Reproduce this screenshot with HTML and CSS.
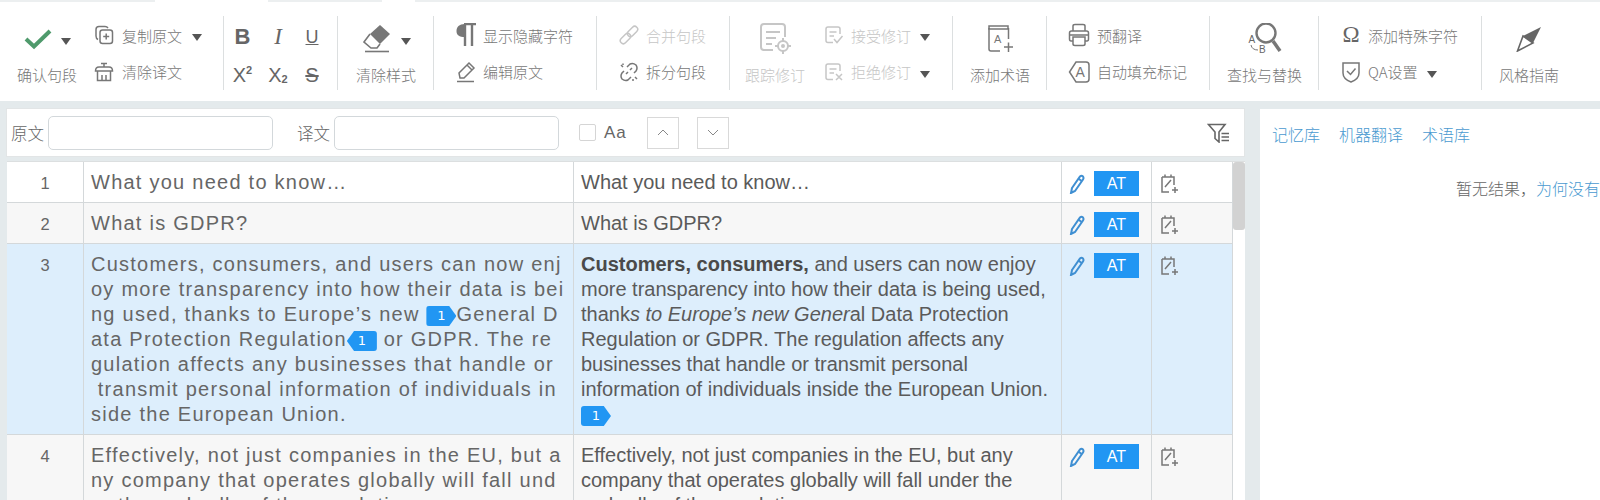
FILE: index.html
```html
<!doctype html>
<html lang="zh-CN">
<head>
    <meta charset="utf-8">
    <title>Editor</title>
    <link rel="stylesheet" href="styles.css">
</head>
<body>
    <div class="top-strip"><i class="seg-a"></i><i class="seg-b"></i><i class="seg-c"></i></div>
    <div class="toolbar">
        <div class="group g-confirm">
            <div class="big">
                <div class="big-icon left-8">
                    <svg width="28" height="22" viewBox="0 0 28 22"><path d="M2 11L10 18.500L26 3" fill="none" stroke="#4f9a6c" stroke-width="4"/></svg>
                    <span class="caret c-11"></span>
                </div>
                <div class="label">确认句段</div>
            </div>
            <div class="rows">
                <div class="row">
                    <svg class="ic" width="20" height="20" viewBox="0 0 20 20"><path d="M4 14.500Q2 13.500 2 11V4.500Q2 1.500 5 1.500H11Q13 1.500 14 3"/><rect x="6" y="5" width="12.500" height="13.500" rx="2.500"/><path d="M12.200 8.500V14.500M9.200 11.500H15.200"/></svg>
                    <span>复制原文</span><span class="caret"></span>
                </div>
                <div class="row">
                    <svg class="ic" width="20" height="20" viewBox="0 0 20 20"><path d="M10 1.500V5M7 1.500H13M1.500 9Q1.500 5 5 5H15Q18.500 5 18.500 9ZM3.500 9V18.500H16.500V9M8 13V18.500M12 13V18.500"/></svg>
                    <span>清除译文</span>
                </div>
            </div>
        </div>
        <div class="group g-format">
            <div class="fmt">
                <b class="f-b">B</b><i class="f-i">I</i><u class="f-u">U</u>
                <span class="f-x">X<sup>2</sup></span><span class="f-x">X<sub>2</sub></span><s class="f-s">S</s>
            </div>
        </div>
        <div class="group g-clear">
            <div class="big">
                <div class="big-icon left-7">
                    <svg width="28" height="29" viewBox="0 0 28 29"><path d="M7 10L1 18L8 24H14L17 20" fill="#fff" stroke="#777" stroke-width="1.600"/><path d="M7 10L17 1L27 10L17 20Z" fill="#777"/><path d="M2 27.500H26" stroke="#777" stroke-width="1.600"/></svg>
                    <span class="caret c-12"></span>
                </div>
                <div class="label">清除样式</div>
            </div>
        </div>
        <div class="group g-hidden">
            <div class="rows">
                <div class="row">
                    <svg width="20" height="24" viewBox="0 0 20 24"><path d="M9 1C3 1 0.500 4 0.500 8S3 14 9 14Z" fill="#777"/><path d="M8 1H20M9 1V23M16 1V23" fill="none" stroke="#777" stroke-width="2.400"/></svg>
                    <span>显示隐藏字符</span>
                </div>
                <div class="row">
                    <svg class="ic" width="20" height="22" viewBox="0 0 20 22"><path d="M4 17L3 12L13 2L18 7L8 17ZM11 4L16 9M1 20.500H18"/></svg>
                    <span>编辑原文</span>
                </div>
            </div>
        </div>
        <div class="group g-merge">
            <div class="rows">
                <div class="row off">
                    <svg class="ic-off" width="20" height="20" viewBox="0 0 20 20"><g transform="rotate(-45 10 10)"><rect x="-1" y="7" width="12" height="6" rx="3"/><rect x="9" y="7" width="12" height="6" rx="3"/></g></svg>
                    <span>合并句段</span>
                </div>
                <div class="row">
                    <svg class="ic" width="20" height="20" viewBox="0 0 20 20"><path d="M8 5L11 2Q14 0.500 17 3Q19 6 17 9L15 11M12 15L9 18Q6 19.500 3 17Q1 14 3 11L5 9M11 8L13 6M7 12L9 10M2 3L4 5M4 1.500V3M16 15L18 17M14 17V19"/></svg>
                    <span>拆分句段</span>
                </div>
            </div>
        </div>
        <div class="group g-track">
            <div class="big off">
                <div class="big-icon center">
                    <svg class="ic-off thick" width="33" height="33" viewBox="0 0 33 33"><path d="M14 28H5Q2 28 2 25V5Q2 2 5 2H23Q26 2 26 5V15M7 10H21M7 16H17M7 22H13M24 16V19M24 29V32M16 24H19M29 24H32"/><circle cx="24" cy="24" r="5"/><circle cx="24" cy="24" r="1"/></svg>
                </div>
                <div class="label">跟踪修订</div>
            </div>
            <div class="rows">
                <div class="row off">
                    <svg class="ic-off" width="20" height="20" viewBox="0 0 20 20"><path d="M9 17.500H4Q2 17.500 2 15.500V4Q2 2 4 2H14Q16 2 16 4V9M5.500 7H12.500M5.500 11H10M10 14L13 17.500L18.500 11"/></svg>
                    <span>接受修订</span><span class="caret"></span>
                </div>
                <div class="row off">
                    <svg class="ic-off" width="20" height="20" viewBox="0 0 20 20"><path d="M9 17.500H4Q2 17.500 2 15.500V4Q2 2 4 2H14Q16 2 16 4V9M5.500 7H12.500M5.500 11H10M12 12L18 18M18 12L12 18"/></svg>
                    <span>拒绝修订</span><span class="caret"></span>
                </div>
            </div>
        </div>
        <div class="group g-term">
            <div class="big">
                <div class="big-icon center">
                    <svg class="ic" width="26" height="29" viewBox="0 0 26 29"><path d="M2 2H21V5H2Z" fill="#777"/><path d="M2 4V25Q2 27 4 27H13M21.500 4V15M17 23H26M21.500 18.500V28"/><text x="7" y="19" class="svg-t">A</text></svg>
                </div>
                <div class="label">添加术语</div>
            </div>
        </div>
        <div class="group g-pre">
            <div class="rows">
                <div class="row">
                    <svg class="ic" width="22" height="24" viewBox="0 0 22 24"><path d="M5 8V3Q5 1.500 7 1.500H15Q17 1.500 17 3V8M5 18H3Q1.500 18 1.500 16V10Q1.500 8 3.500 8H18.500Q20.500 8 20.500 10V16Q20.500 18 19 18H17M5 14H17V21Q17 22.500 15 22.500H7Q5 22.500 5 21ZM1.500 12H20.500"/></svg>
                    <span>预翻译</span>
                </div>
                <div class="row">
                    <svg class="ic" width="22" height="24" viewBox="0 0 22 24"><path d="M8 2H18Q21 2 21 5V19Q21 22 18 22H8L1.500 12Z"/><text x="7.500" y="17" class="svg-t big-t">A</text></svg>
                    <span>自动填充标记</span>
                </div>
            </div>
        </div>
        <div class="group g-find">
            <div class="big">
                <div class="big-icon center">
                    <svg width="34" height="32" viewBox="0 0 34 32"><circle cx="18" cy="10" r="9.500" fill="none" stroke="#777" stroke-width="2.400"/><path d="M25 18L32 28" stroke="#777" stroke-width="3.500"/><text x="0.500" y="19.500" class="svg-s">A</text><text x="11" y="29.500" class="svg-s">B</text><path d="M3 22Q4 27 10 27" fill="none" stroke="#777"/></svg>
                </div>
                <div class="label">查找与替换</div>
            </div>
        </div>
        <div class="group g-char">
            <div class="rows">
                <div class="row">
                    <span class="omega">Ω</span>
                    <span>添加特殊字符</span>
                </div>
                <div class="row">
                    <svg class="ic" width="20" height="24" viewBox="0 0 20 24"><path d="M2 3H18V13Q18 19 10 22Q2 19 2 13ZM6 11L9.500 14.500L14.500 8.500"/></svg>
                    <span>QA设置</span><span class="caret"></span>
                </div>
            </div>
        </div>
        <div class="group g-guide">
            <div class="big">
                <div class="big-icon center">
                    <svg width="26" height="26" viewBox="0 0 26 26"><path d="M25 1L7 10L17 17Z" fill="#666"/><path d="M7 10L1.500 25L17 17Z" fill="none" stroke="#666" stroke-width="1.600"/></svg>
                </div>
                <div class="label">风格指南</div>
            </div>
        </div>
    </div>

    <div class="main">
        <div class="left-panel">
            <div class="filter-bar">
                <span class="filter-label">原文</span>
                <input class="filter-input" type="text">
                <span class="filter-label second">译文</span>
                <input class="filter-input" type="text">
                <span class="check"></span>
                <span class="aa">Aa</span>
                <button class="nav-btn up" type="button"><svg width="12" height="7" viewBox="0 0 12 7"><path d="M1 6L6 1L11 6" fill="none" stroke="#888"/></svg></button>
                <button class="nav-btn" type="button"><svg width="12" height="7" viewBox="0 0 12 7"><path d="M1 1L6 6L11 1" fill="none" stroke="#888"/></svg></button>
                <svg class="filter-icon" width="23" height="20" viewBox="0 0 23 20"><path d="M1.500 1.500H18L12 9V19L8 15.500V9ZM14.500 10.500H22M14.500 14H22M14.500 17.500H22" fill="none" stroke="#666" stroke-width="1.600"/></svg>
            </div>
            <div class="table">
                <div class="rows-list">
                    <div class="t-row r-white">
                        <div class="num">1</div>
                        <div class="src">What you need to know…</div>
                        <div class="tgt">What you need to know…</div>
                        <div class="act"><svg class="pen" width="16" height="20" viewBox="0 0 16 20"><path d="M3 14L11 2.500Q12.500 1 14 2.500Q15 4 14 5.500L6 17L2 19ZM9.500 4.500L12.500 7"/></svg><span class="at">AT</span></div>
                        <div class="note"><svg class="ic" width="19" height="21" viewBox="0 0 19 21"><path d="M2 4H14V12M2 4V19H9M5 1.500V4M11 1.500V4M5 14L11 7M12 17H18M15 14V20"/></svg></div>
                    </div>
                    <div class="t-row r-grey">
                        <div class="num">2</div>
                        <div class="src">What is GDPR?</div>
                        <div class="tgt">What is GDPR?</div>
                        <div class="act"><svg class="pen" width="16" height="20" viewBox="0 0 16 20"><path d="M3 14L11 2.500Q12.500 1 14 2.500Q15 4 14 5.500L6 17L2 19ZM9.500 4.500L12.500 7"/></svg><span class="at">AT</span></div>
                        <div class="note"><svg class="ic" width="19" height="21" viewBox="0 0 19 21"><path d="M2 4H14V12M2 4V19H9M5 1.500V4M11 1.500V4M5 14L11 7M12 17H18M15 14V20"/></svg></div>
                    </div>
                    <div class="t-row r-active">
                        <div class="num">3</div>
                        <div class="src">Customers, consumers, and users can now enj<br>oy more transparency into how their data is bei<br>ng used, thanks to Europe’s new <span class="tag open">1</span>General D<br>ata Protection Regulation<span class="tag close">1</span> or GDPR. The re<br>gulation affects any businesses that handle or<br> transmit personal information of individuals in<br>side the European Union.</div>
                        <div class="tgt"><b>Customers, consumers,</b> and users can now enjoy more transparency into how their data is being used, thank<em>s to Europe’s new Gener</em>al Data Protection Regulation or GDPR. The regulation affects any businesses that handle or transmit personal information of individuals inside the European Union. <span class="tag open">1</span></div>
                        <div class="act"><svg class="pen" width="16" height="20" viewBox="0 0 16 20"><path d="M3 14L11 2.500Q12.500 1 14 2.500Q15 4 14 5.500L6 17L2 19ZM9.500 4.500L12.500 7"/></svg><span class="at">AT</span></div>
                        <div class="note"><svg class="ic" width="19" height="21" viewBox="0 0 19 21"><path d="M2 4H14V12M2 4V19H9M5 1.500V4M11 1.500V4M5 14L11 7M12 17H18M15 14V20"/></svg></div>
                    </div>
                    <div class="t-row r-grey">
                        <div class="num">4</div>
                        <div class="src">Effectively, not just companies in the EU, but a<br>ny company that operates globally will fall und<br>er the umbrella of the regulation.</div>
                        <div class="tgt">Effectively, not just companies in the EU, but any company that operates globally will fall under the umbrella of the regulation.</div>
                        <div class="act"><svg class="pen" width="16" height="20" viewBox="0 0 16 20"><path d="M3 14L11 2.500Q12.500 1 14 2.500Q15 4 14 5.500L6 17L2 19ZM9.500 4.500L12.500 7"/></svg><span class="at">AT</span></div>
                        <div class="note"><svg class="ic" width="19" height="21" viewBox="0 0 19 21"><path d="M2 4H14V12M2 4V19H9M5 1.500V4M11 1.500V4M5 14L11 7M12 17H18M15 14V20"/></svg></div>
                    </div>
                </div>
                <div class="scroll-track"><div class="scroll-thumb"></div></div>
            </div>
        </div>
        <div class="right-panel">
            <div class="tabs"><a>记忆库</a><a>机器翻译</a><a>术语库</a></div>
            <div class="no-result">暂无结果，<a>为何没有结果？</a></div>
        </div>
    </div>
</body>
</html>
```

FILE: styles.css
```css
body {
    margin: 0;
    height: 500px;
    overflow: hidden;
    background-color: #e4eaec;
    font-family: "Liberation Sans", "Noto Sans CJK SC", sans-serif;
    color: #666;
}
.top-strip {
    display: flex;
    height: 2px;
    background-color: #fff;
}
.top-strip i {
    background-color: #eceff0;
}
.seg-a {
    width: 155px;
    margin-right: 113px;
}
.seg-b {
    width: 114px;
    margin-right: 33px;
}
.seg-c {
    flex: 1;
}

/* toolbar */
.toolbar {
    display: flex;
    height: 85px;
    padding-top: 14px;
    background-color: #fff;
    font-family: "Noto Sans CJK SC", sans-serif;
    font-size: 15px;
    font-weight: 300;
    color: #777;
}
.group {
    display: flex;
    height: 74px;
    box-sizing: border-box;
    border-right: 1px solid #dcdfe0;
    padding-left: 17px;
    flex-shrink: 0;
}
.g-confirm { width: 224px; }
.g-format { width: 114px; padding-left: 0; }
.g-clear { width: 96px; padding-left: 18px; }
.g-hidden { width: 163px; padding-left: 22px; }
.g-merge { width: 133px; padding-left: 22px; }
.g-track { width: 223px; padding-left: 15px; }
.g-term { width: 94px; }
.g-pre { width: 163px; padding-left: 21px; }
.g-find { width: 109px; }
.g-char { width: 163px; padding-left: 22px; }
.g-guide { width: 118px; border-right: none; }

.big {
    display: flex;
    flex-direction: column;
}
.g-confirm .big { width: 77px; }
.g-track .big { width: 79px; }
.g-track .big-icon { padding-right: 19px; }
.g-confirm .row { gap: 8px; }
.big-icon {
    display: flex;
    align-items: center;
    height: 46px;
    padding-top: 3px;
    box-sizing: border-box;
}
.big-icon.center { justify-content: center; }
.left-8 { padding-left: 7px; }
.left-7 { padding-left: 7px; }
.label {
    line-height: 30px;
    margin-top: 2px;
    white-space: nowrap;
}
.rows {
    display: flex;
    flex-direction: column;
}
.row {
    display: flex;
    align-items: center;
    gap: 7px;
    height: 38px;
    white-space: nowrap;
}
.row:first-child { padding-top: 1px; }
.off { color: #c6c6c6; }
.ic path, .ic rect, .ic circle {
    fill: none;
    stroke: #777;
    stroke-width: 1.500;
}
.ic .svg-t { fill: #777; }
.ic-off path, .ic-off rect, .ic-off circle {
    fill: none;
    stroke: #c6c6c6;
    stroke-width: 1.500;
}
.ic-off.thick path, .ic-off.thick circle { stroke-width: 2; }
.svg-t {
    font-family: "Liberation Sans", sans-serif;
    font-size: 11px;
    fill: #777;
}
.big-t { font-size: 14px; }
.svg-s {
    font-family: "Liberation Sans", sans-serif;
    font-size: 10px;
    fill: #666;
}
.caret {
    display: inline-block;
    width: 0;
    height: 0;
    border-style: solid;
    border-color: #555 transparent transparent;
    border-width: 7px 5.500px 0;
    margin: 5px 0 0 2px;
}
.c-11 { margin: 5px 0 0 9px; }
.c-12 { margin: 5px 0 0 10px; }
.omega {
    width: 20px;
    text-align: center;
    font-family: "Liberation Serif", serif;
    font-size: 23px;
    color: #666;
}

/* bold, italic and so on */
.fmt {
    display: grid;
    grid-template-columns: 37px 34px 34px;
    grid-template-rows: 38px 38px;
    align-items: center;
    justify-items: center;
}
.fmt > * {
    font-family: "Liberation Sans", sans-serif;
    color: #666;
    font-weight: 400;
    font-style: normal;
    line-height: 1;
    margin-top: 3px;
}
.fmt .f-b { font-size: 22px; font-weight: 700; }
.fmt .f-i { font-family: "Liberation Serif", serif; font-size: 23px; font-style: italic; }
.fmt .f-u { font-size: 18px; }
.fmt .f-x { font-size: 20px; }
.fmt .f-x sup, .fmt .f-x sub { font-size: 11px; font-weight: 700; line-height: 0; }
.fmt .f-x sub { vertical-align: -1px; }
.fmt .f-s { font-size: 20px; }

/* main area */
.main {
    display: flex;
    gap: 15px;
    padding: 7px 0 0 6px;
    height: 392px;
    overflow: hidden;
}
.left-panel {
    width: 1239px;
    flex-shrink: 0;
}
.filter-bar {
    display: flex;
    align-items: center;
    height: 49px;
    box-sizing: border-box;
    background-color: #fff;
    border: 1px solid #e2e5e6;
    padding-left: 4px;
    margin-bottom: 4px;
}
.filter-label {
    font-family: "Noto Sans CJK SC", sans-serif;
    font-weight: 300;
    font-size: 16.500px;
    color: #666;
    margin-right: 4px;
}
.filter-label.second { margin-left: 24px; }
.filter-input {
    width: 225px;
    height: 34px;
    box-sizing: border-box;
    border: 1px solid #d3d8db;
    border-radius: 5px;
    background-color: #fff;
}
.check {
    width: 17px;
    height: 17px;
    box-sizing: border-box;
    border: 1px solid #d5d5d5;
    border-radius: 2px;
    margin-left: 20px;
}
.aa {
    font-size: 17px;
    letter-spacing: 1px;
    margin-left: 8px;
    color: #666;
}
.nav-btn {
    display: flex;
    align-items: center;
    justify-content: center;
    width: 32px;
    height: 32px;
    padding: 0;
    border: 1px solid #d9d9d9;
    background-color: #fff;
    margin-left: 18px;
}
.nav-btn.up { margin-left: 20px; }
.filter-icon {
    margin-left: auto;
    margin-right: 14px;
}
.table {
    display: flex;
    margin-left: 1px;
    background-color: #fff;
    border-top: 1px solid #dcdfe0;
}
.rows-list {
    width: 1226px;
}
.t-row {
    display: grid;
    grid-template-columns: 76px 490px 488px 90px 82px;
    border-bottom: 1px solid #d4d8da;
    line-height: 25px;
}
.t-row > div {
    padding: 8px 7px 7px;
    box-sizing: border-box;
    border-left: 1px solid #d4d8da;
}
.t-row > div:first-child { border-left: none; }
.t-row > div:last-child { border-right: 1px solid #d4d8da; }
.r-white { background-color: #fff; }
.r-grey { background-color: #f7f7f7; }
.r-active { background-color: #ddeefc; }
.t-row > .num {
    padding: 9px 7px 6px;
    text-align: center;
    font-size: 16.500px;
    color: #666;
}
.src {
    font-size: 20px;
    letter-spacing: 1.250px;
    white-space: pre;
    color: #666;
}
.tgt {
    font-size: 20px;
    color: #5a5a5a;
}
.tgt b { color: #4a4a4a; }
.act {
    display: flex;
    align-items: flex-start;
    gap: 9px;
}
.t-row > .act { padding: 9px 0 0 7px; }
.t-row > .note { padding: 11px 0 0 8px; }
.pen {
    flex-shrink: 0;
    margin-top: 3px;
}
.pen path {
    fill: none;
    stroke: #3f8fd2;
    stroke-width: 2;
}
.at {
    width: 45px;
    height: 25px;
    line-height: 25px;
    text-align: center;
    background-color: #2196f3;
    color: #fff;
    font-size: 16px;
}
.tag {
    display: inline-block;
    width: 30px;
    height: 20px;
    line-height: 20px;
    border-radius: 3px;
    background-color: #2196f3;
    color: #fff;
    font-family: "DejaVu Sans", sans-serif;
    font-size: 13px;
    letter-spacing: 0;
    text-align: center;
    vertical-align: 1px;
}
.tag.open { clip-path: polygon(0 0, 76% 0, 100% 50%, 76% 100%, 0 100%); }
.tag.close { clip-path: polygon(24% 0, 100% 0, 100% 100%, 24% 100%, 0 50%); }
.scroll-track {
    width: 12px;
    background-color: #fff;
}
.scroll-thumb {
    height: 68px;
    border-radius: 3px;
    background-color: #d2d2d2;
}

/* right side */
.right-panel {
    flex: 1;
    min-width: 0;
    background-color: #fff;
    margin-top: 1px;
    overflow: hidden;
    font-family: "Noto Sans CJK SC", sans-serif;
    font-weight: 300;
    font-size: 16px;
    white-space: nowrap;
}
.right-panel a { color: #4a9ad0; }
.tabs {
    display: flex;
    gap: 19px;
    padding: 13px 0 0 12px;
    line-height: 24px;
}
.no-result {
    padding: 30px 0 0 196px;
    line-height: 24px;
    color: #666;
}
```
